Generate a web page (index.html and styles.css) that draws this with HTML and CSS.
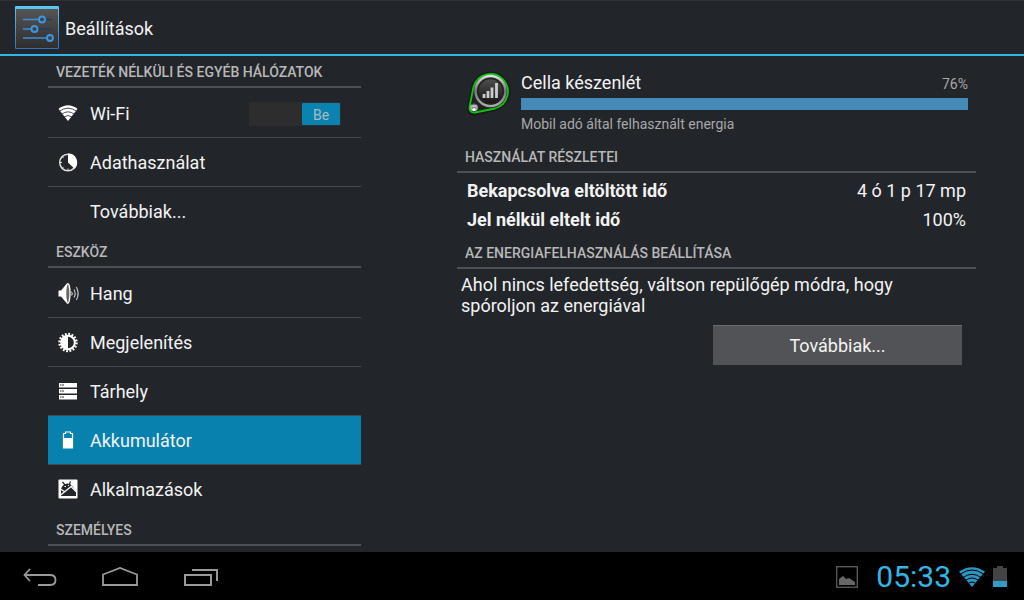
FILE: index.html
```html
<!DOCTYPE html>
<html lang="hu">
<head>
    <meta charset="UTF-8">
    <meta name="viewport" content="width=device-width, initial-scale=1.0">
    <title>Beállítások</title>
    <link rel="stylesheet" href="styles.css">
</head>
<body>
<header class="action-bar">
    <svg class="app-icon" viewBox="0 0 44 44">
        <defs>
            <linearGradient id="plate" x1="0" y1="0" x2="0" y2="1">
                <stop offset="0" stop-color="#555"/>
                <stop offset="1" stop-color="#2e2e2e"/>
            </linearGradient>
            <linearGradient id="frame" x1="0" y1="0" x2="0" y2="1">
                <stop offset="0" stop-color="#5cc8f5"/>
                <stop offset="1" stop-color="#2f6fc0"/>
            </linearGradient>
        </defs>
        <rect x="0" y="-1" width="44" height="43" rx="1" fill="url(#frame)"/>
        <rect x="1" y="2" width="42" height="39" fill="url(#plate)"/>
        <g fill="none" stroke="#3d8fd6" stroke-width="1.4">
            <path d="M8 12.500H24M8 22H16M8 31H32"/>
            <path d="M30 12.500H37M22 22H37" stroke="#1f3f63"/>
        </g>
        <g fill="#3a4650" stroke="#3f97e0" stroke-width="1.800">
            <circle cx="27" cy="12.500" r="3"/>
            <circle cx="19.500" cy="22" r="3"/>
            <circle cx="35" cy="31" r="3"/>
        </g>
    </svg>
    <h1>Beállítások</h1>
</header>

<main class="panes">
    <nav class="sidebar">
        <h2>Vezeték nélküli és egyéb hálózatok</h2>
        <ul>
            <li>
                <a href="#wifi">
                    <svg viewBox="0 0 20 20">
                        <path d="M.5 5Q10-2.500 19.500 5L10 17Z" fill="#fff"/>
                        <path d="M1 7.500Q10 .8 19 7.500M3.500 10.300Q10 5.300 16.500 10.300M6 13Q10 10 14 13" fill="none" stroke="#22252a" stroke-width=".8"/>
                    </svg>
                    Wi-Fi
                </a>
                <label class="switch">
                    <input type="checkbox" aria-label="Wi-Fi" checked>
                    <span class="thumb">Be</span>
                </label>
            </li>
            <li>
                <a href="#data">
                    <svg viewBox="0 0 20 20">
                        <circle cx="10" cy="9.500" r="8.300" fill="none" stroke="#ddd" stroke-width="1.500"/>
                        <path d="M10 9.500V.5A9 9 0 0 1 16.500 15.800Z" fill="#fff"/>
                        <path d="M2 9.500H4M4.300 3.800l1.300 1.300M4.300 15.200l1.300-1.300M10 17.500V15.500" stroke="#ddd"/>
                    </svg>
                    Adathasználat
                </a>
            </li>
            <li><a href="#more" class="no-icon">Továbbiak...</a></li>
        </ul>

        <h2>Eszköz</h2>
        <ul>
            <li>
                <a href="#sound">
                    <svg viewBox="0 0 20 20">
                        <path d="M.5 6.500H3L8.500 0V19L3 12.500H.5Z" fill="#fff"/>
                        <ellipse cx="9.800" cy="9.500" rx="2.200" ry="9.800" fill="#666" stroke="#fff" stroke-width="1.300"/>
                        <path d="M13.500 7.500Q15 9.500 13.500 11.500M16 5.500Q18.300 9.500 16 13.500M18.300 3Q22 9.500 18.300 16" fill="none" stroke="#ccc" stroke-width="1.100"/>
                    </svg>
                    Hang
                </a>
            </li>
            <li>
                <a href="#display">
                    <svg viewBox="0 0 20 20">
                        <circle cx="10" cy="9.500" r="8.500" fill="none" stroke="#fff" stroke-width="2.400" stroke-dasharray="1.800 1.538"/>
                        <circle cx="10" cy="9.500" r="6.800" fill="#22252a" stroke="#fff" stroke-width="2"/>
                        <path d="M10 2.500A7 7 0 0 0 10 16.500Z" fill="#fff"/>
                    </svg>
                    Megjelenítés
                </a>
            </li>
            <li>
                <a href="#storage">
                    <svg viewBox="0 0 20 20">
                        <path d="M1 1H19V5.500H1ZM1 7H19V11.500H1ZM1 13H19V17.500H1Z" fill="#fff"/>
                        <path d="M2 3H6M2 9H6M2 15H6" stroke="#333"/>
                        <path d="M3.500 2.500V3.500M3.500 8.500V9.500M3.500 14.500V15.500" stroke="#fff"/>
                    </svg>
                    Tárhely
                </a>
            </li>
            <li class="selected">
                <a href="#battery" aria-current="page">
                    <svg viewBox="0 0 20 20">
                        <path d="M5.500 17V2.500H7.500V1H12.500V2.500H14.500V17Z" fill="none" stroke="#fff" stroke-width="1.200"/>
                        <path d="M6 7H14V17H6Z" fill="#fff"/>
                    </svg>
                    Akkumulátor
                </a>
            </li>
            <li>
                <a href="#apps">
                    <svg viewBox="0 0 20 20">
                        <rect x=".5" y="-.5" width="19" height="19" rx="1" fill="#fff"/>
                        <path d="M3 16V10A6.500 6.500 0 0 1 14 5.500L18 12V16Z" fill="#22252a"/>
                        <path d="M4.500 2L7 5M12.500 1.500L11.500 4" stroke="#22252a" stroke-width="1.200"/>
                        <path d="M2 15.500L15 5M2.500 9L7 12M13.500 7L18.500 12" fill="none" stroke="#fff" stroke-width="1.200"/>
                        <path d="M6.500 6.500H8M10 5.500H11" stroke="#fff"/>
                    </svg>
                    Alkalmazások
                </a>
            </li>
        </ul>

        <h2>Személyes</h2>
    </nav>

    <section class="details">
        <div class="usage">
            <svg class="cell-icon" viewBox="0 0 48 48">
                <defs>
                    <linearGradient id="ring" x1="0" y1="0" x2="0" y2="1">
                        <stop offset="0" stop-color="#ddd"/>
                        <stop offset=".5" stop-color="#777"/>
                        <stop offset="1" stop-color="#aaa"/>
                    </linearGradient>
                    <linearGradient id="face" x1="0" y1="0" x2="0" y2="1">
                        <stop offset="0" stop-color="#555"/>
                        <stop offset="1" stop-color="#111"/>
                    </linearGradient>
                </defs>
                <path d="M8 18A18 18 0 1 1 30 40L10 44.500Q3.500 45 4 38.500Z" fill="#111" stroke="#0b0f0b" stroke-width="4" opacity=".4"/>
                <path d="M8.500 18A17.500 17.500 0 1 1 30 39.500L10 43.500Q4 44 4.500 38Z" fill="#202220" stroke="#12c212" stroke-width="1.800"/>
                <circle cx="25.500" cy="22" r="15" fill="url(#face)" stroke="url(#ring)" stroke-width="2.500"/>
                <circle cx="25.500" cy="22" r="12.500" fill="none" stroke="#222" stroke-width="1.500"/>
                <path d="M19 29V25M23 29V22M27 29V18.500M31.500 29V14" stroke="#ccc" stroke-width="2.800"/>
                <circle cx="9" cy="38.500" r="3.800" fill="#bbb"/>
                <path d="M6.500 36Q9 34 11.500 36M6.500 39H11.500" fill="none" stroke="#555"/>
                <circle cx="9" cy="40.500" r="1.500" fill="#fff"/>
            </svg>
            <div class="usage-body">
                <div class="usage-title">
                    <span>Cella készenlét</span>
                    <span class="percent">76%</span>
                </div>
                <div class="bar"><div class="bar-fill" style="width: 100%"></div></div>
                <p class="note">Mobil adó által felhasznált energia</p>
            </div>
        </div>

        <h2>Használat részletei</h2>
        <table>
            <tr>
                <th scope="row">Bekapcsolva eltöltött idő</th>
                <td>4 ó 1 p 17 mp</td>
            </tr>
            <tr>
                <th scope="row">Jel nélkül eltelt idő</th>
                <td>100%</td>
            </tr>
        </table>

        <h2>Az energiafelhasználás beállítása</h2>
        <p class="hint">Ahol nincs lefedettség, váltson repülőgép módra, hogy spóroljon az energiával</p>
        <div class="actions">
            <button type="button">Továbbiak...</button>
        </div>
    </section>
</main>

<footer class="system-bar">
    <div class="nav-keys">
        <button type="button" aria-label="Vissza">
            <svg viewBox="0 0 40 24">
                <path d="M10 5L4.500 11L10 17M5 11H30Q35.500 11 35.500 16Q35.500 21 30 21H18" fill="none" stroke="#999" stroke-width="1.800"/>
            </svg>
        </button>
        <button type="button" aria-label="Kezdőlap">
            <svg viewBox="0 0 40 24">
                <path d="M3 21V10.500L20 4L37 10.500V21Z" fill="none" stroke="#999" stroke-width="1.800"/>
            </svg>
        </button>
        <button type="button" aria-label="Legutóbbiak">
            <svg viewBox="0 0 40 24">
                <path d="M5 11H31V21H5ZM12 6H37V17" fill="none" stroke="#999" stroke-width="2"/>
            </svg>
        </button>
    </div>
    <div class="status">
        <svg class="picture" viewBox="0 0 22 22">
            <rect x=".7" y=".7" width="20.600" height="20.600" fill="none" stroke="#555" stroke-width="1.400"/>
            <path d="M3 19V13L7 10L10 13L13 12L16 14L19 16V19Z" fill="#666"/>
        </svg>
        <span class="clock">05:33</span>
        <svg class="signal" viewBox="0 0 26 20">
            <path d="M0 4.500Q13-4 26 4.500L13 20Z" fill="#2f94bf"/>
            <path d="M1.500 7Q13-1 24.500 7M4 10.500Q13 4 22 10.500M6.500 13.500Q13 8.500 19.500 13.500M9 16.700Q13 13.500 17 16.700" fill="none" stroke="#000" stroke-width="1"/>
        </svg>
        <svg class="battery" viewBox="0 0 14 21">
            <path d="M0 2H4V0H10V2H14V21H0Z" fill="#444"/>
            <path d="M0 15H14V21H0Z" fill="#2f9cc8"/>
        </svg>
    </div>
</footer>
</body>
</html>
```

FILE: styles.css
```css
* {
    box-sizing: border-box;
}
body {
    height: 100vh;
    margin: 0;
    display: flex;
    flex-direction: column;
    background-color: #22252a;
    color: #f3f3f3;
    font-family: Roboto, sans-serif;
    font-size: 18px;
}
h1, h2, p, ul {
    margin: 0;
    padding: 0;
}
button {
    border: none;
    font: inherit;
    color: inherit;
}

/* top bar */
.action-bar {
    flex: none;
    display: flex;
    align-items: center;
    gap: 6px;
    height: 56px;
    padding: 2px 0 0 15px;
    border-top: 1px solid #2d3035;
    border-bottom: 2px solid #33b5e5;
}
.app-icon {
    width: 44px;
    height: 44px;
    overflow: visible;
}
h1 {
    font-size: 18px;
    font-weight: 400;
}

/* two panes */
.panes {
    flex: 1;
    min-height: 0;
    overflow: hidden;
    display: grid;
    grid-template-columns: 313fr 519fr;
    gap: 96px;
    padding: 0 48px;
}
h2 {
    height: 32px;
    padding: 0 8px;
    border-bottom: 2px solid #4d5055;
    color: #b8b8b8;
    font-size: 14px;
    font-weight: 500;
    line-height: 32px;
    text-transform: uppercase;
    white-space: nowrap;
}

/* settings list */
.sidebar ul {
    list-style: none;
    padding-bottom: 1px;
}
.sidebar li {
    display: flex;
    align-items: center;
    height: 49px;
    padding: 2px 20px 0 10px;
}
.sidebar li + li {
    border-top: 1px solid #45484d;
}
.sidebar li.selected {
    background-color: #0881ae;
}
.sidebar a {
    flex: 1;
    display: flex;
    align-items: center;
    gap: 12px;
    color: inherit;
    line-height: 46px;
    text-decoration: none;
}
.sidebar a svg {
    width: 20px;
    height: 20px;
    overflow: visible;
}
.sidebar a.no-icon {
    padding-left: 32px;
}
.switch {
    display: flex;
    justify-content: flex-end;
    width: 92px;
    height: 24px;
    padding: 1px;
    background-color: #2d2d2e;
}
.switch input {
    position: absolute;
    opacity: 0;
}
.thumb {
    width: 38px;
    border-radius: 1px;
    background-color: #0a83b0;
    color: #a5bcc5;
    font-size: 14px;
    line-height: 24px;
    text-align: center;
}

/* battery details */
.usage {
    display: flex;
    gap: 8px;
    height: 85px;
    padding: 13px 8px 0;
}
.cell-icon {
    flex: none;
    width: 48px;
    height: 48px;
}
.usage-body {
    flex: 1;
}
.usage-title {
    display: flex;
    justify-content: space-between;
    align-items: baseline;
    line-height: 28px;
}
.percent, .note {
    color: #a8a8a8;
    font-size: 14px;
}
.bar-fill {
    height: 12px;
    background-color: #468ab8;
}
.note {
    line-height: 28px;
}
table {
    width: 100%;
    padding: 3px 10px;
    border-spacing: 0;
}
th, td {
    padding: 0;
    line-height: 29px;
}
th {
    text-align: left;
}
td {
    text-align: right;
}
.hint {
    padding: 5px 14px 9px 4px;
    line-height: 21px;
}
.actions {
    display: flex;
    justify-content: flex-end;
    padding-right: 14px;
}
.actions button {
    width: 249px;
    height: 40px;
    border-top: 1px solid #6b6c6f;
    background-color: #525356;
}

/* bottom bar */
.system-bar {
    flex: none;
    display: flex;
    justify-content: space-between;
    align-items: center;
    height: 48px;
    padding: 0 17px 0 20px;
    background-color: #000;
}
.nav-keys {
    display: flex;
    gap: 40px;
}
.nav-keys button {
    padding: 0;
    background: none;
}
.nav-keys svg {
    display: block;
    width: 40px;
    height: 24px;
}
.status {
    display: flex;
    align-items: center;
    gap: 8px;
    padding-top: 1px;
}
.picture {
    width: 22px;
    height: 22px;
    margin-right: 10px;
}
.clock {
    color: #33b5e5;
    font-size: 30px;
}
.signal {
    width: 26px;
    height: 20px;
}
.battery {
    width: 14px;
    height: 21px;
}
```
